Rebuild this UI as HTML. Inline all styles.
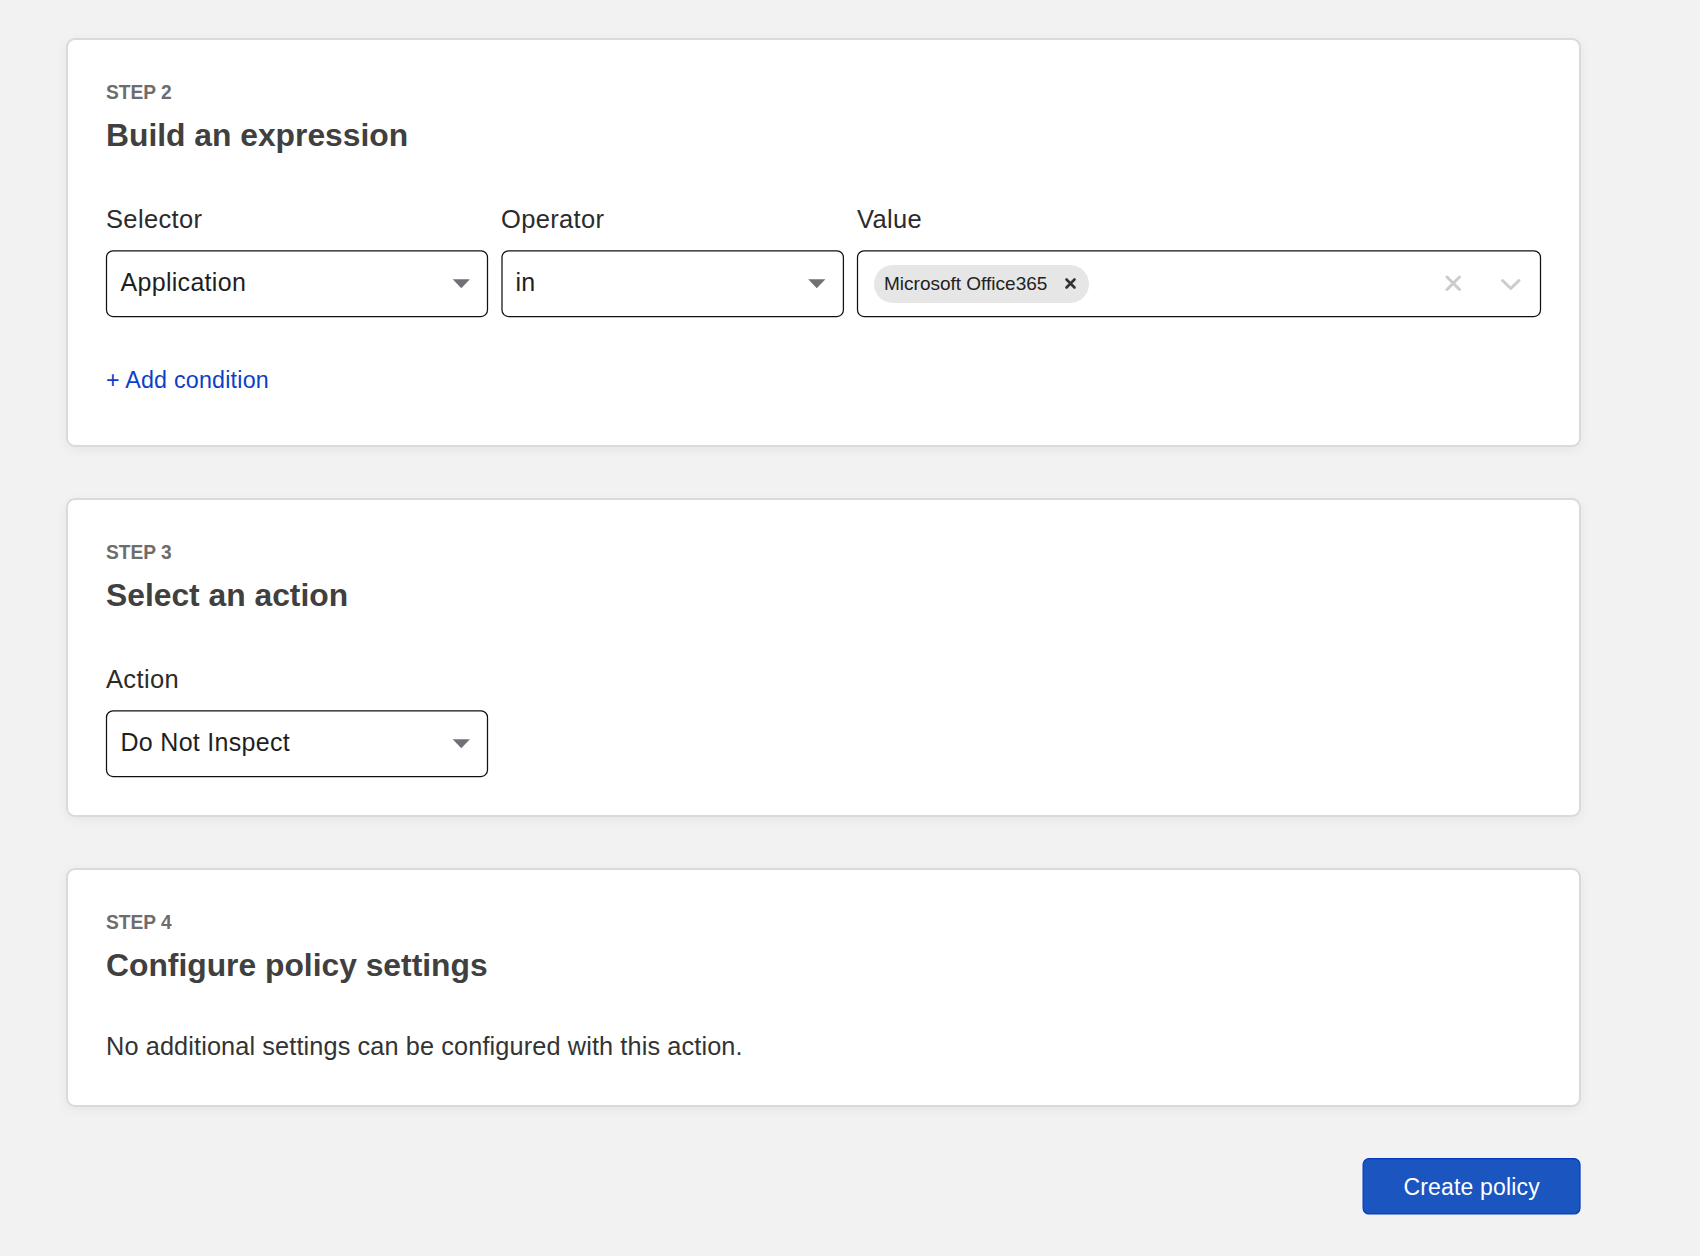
<!DOCTYPE html>
<html>
<head>
<meta charset="utf-8">
<style>
html,body{margin:0;padding:0;}
body{width:1700px;height:1256px;background:#f2f2f2;position:relative;overflow:hidden;font-family:"Liberation Sans",sans-serif;}
.card{position:absolute;left:66px;width:1515px;background:#fff;border:2px solid #dadada;box-sizing:border-box;border-radius:9px;box-shadow:0 3px 12px rgba(0,0,0,0.055);}
.t{position:absolute;white-space:nowrap;line-height:1;}
.step{font-size:19.8px;font-weight:700;color:#6d6d6d;left:106px;transform:scaleX(0.97);transform-origin:0 0;}
.title{font-size:31.8px;font-weight:700;color:#404040;left:106px;}
.label{font-size:25.5px;color:#2b2b2b;letter-spacing:0.35px;}
.seltext{font-size:25px;color:#1f1f1f;letter-spacing:0.3px;}
.link{font-size:23.3px;color:#0b3fc8;left:106px;letter-spacing:0.2px;}
.body{font-size:25.3px;color:#333;left:106px;letter-spacing:0.115px;}
</style>
</head>
<body>
<!-- Cards -->
<div class="card" style="top:38px;height:409px;"></div>
<div class="card" style="top:498px;height:319px;"></div>
<div class="card" style="top:868px;height:239px;"></div>

<!-- Select boxes -->
<svg style="position:absolute;left:0;top:0;" width="1700" height="1256" viewBox="0 0 1700 1256">
<g fill="#fff" stroke="#111" stroke-width="1.25">
<rect x="106.5" y="250.9" width="381" height="65.6" rx="6.5"/>
<rect x="502" y="250.9" width="341.4" height="65.6" rx="6.5"/>
<rect x="857.5" y="250.9" width="683" height="65.6" rx="6.5"/>
<rect x="106.5" y="710.9" width="381" height="65.6" rx="6.5"/>
</g>
<g fill="#6e7276">
<polygon points="452.7,279.3 469.9,279.3 461.3,288.2"/>
<polygon points="808.2,279.3 825.4,279.3 816.8,288.2"/>
<polygon points="452.7,739.3 469.9,739.3 461.3,748.2"/>
</g>
<rect x="874" y="265" width="215" height="38" rx="19" fill="#e6e6e6"/>
<path d="M1066.5 279.5L1074.5 287.5M1074.5 279.5L1066.5 287.5" stroke="#333" stroke-width="2.6" stroke-linecap="round"/>
<path d="M1447 277L1459.5 289.5M1459.5 277L1447 289.5" stroke="#cccccc" stroke-width="3" stroke-linecap="round"/>
<path d="M1502.5 280.5L1510.8 288.5L1519 280.5" fill="none" stroke="#cccccc" stroke-width="3" stroke-linecap="round" stroke-linejoin="round"/>
</svg>

<!-- Card 1 -->
<div class="t step" style="top:82.6px;">STEP 2</div>
<div class="t title" style="top:120px;">Build an expression</div>
<div class="t label" style="left:106px;top:206.7px;">Selector</div>
<div class="t label" style="left:501px;top:206.7px;">Operator</div>
<div class="t label" style="left:857px;top:206.7px;">Value</div>

<div class="t seltext" style="left:120.5px;top:269.9px;">Application</div>

<div class="t seltext" style="left:515.5px;top:269.9px;">in</div>

<div class="t" style="left:884px;top:273.5px;font-size:19px;color:#222;">Microsoft Office365</div>

<div class="t link" style="top:369.2px;">+ Add condition</div>

<!-- Card 2 -->
<div class="t step" style="top:542.6px;">STEP 3</div>
<div class="t title" style="top:580px;">Select an action</div>
<div class="t label" style="left:106px;top:666.7px;">Action</div>
<div class="t seltext" style="left:120.5px;top:729.9px;">Do Not Inspect</div>

<!-- Card 3 -->
<div class="t step" style="top:912.6px;">STEP 4</div>
<div class="t title" style="top:950px;">Configure policy settings</div>
<div class="t body" style="top:1033.5px;">No additional settings can be configured with this action.</div>

<!-- Button -->
<svg style="position:absolute;left:0;top:0;" width="1700" height="1256" viewBox="0 0 1700 1256"><rect x="1363.1" y="1158.6" width="216.9" height="55.4" rx="6" fill="#1b55c0" stroke="#0538c0" stroke-width="1.2"/></svg>
<div class="t" style="left:1403.5px;top:1175.6px;font-size:23px;color:#fff;letter-spacing:0.17px;">Create policy</div>
</body>
</html>
